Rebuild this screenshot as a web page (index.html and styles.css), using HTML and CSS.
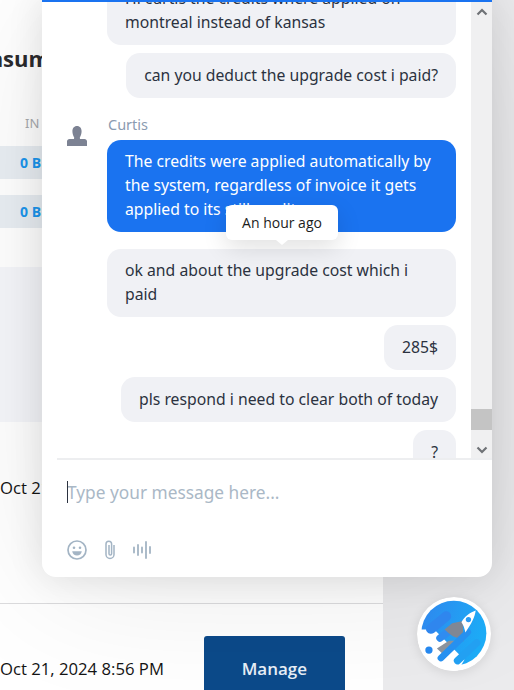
FILE: index.html
```html
<!DOCTYPE html>
<html lang="en">
<head>
<meta charset="utf-8">
<title>Chat</title>
<link rel="stylesheet" href="styles.css">
</head>
<body>
<main class="page">
  <section class="card">
    <h2 class="card-title">Consumption</h2>
    <div class="col-head">IN</div>
    <div class="stat-row"><b>0 B</b></div>
    <div class="stat-row"><b>0 B</b></div>
  </section>
  <section class="band"></section>
  <section class="row row-date-only">
    <span class="date">Oct 21, 2024 8:56 PM</span>
  </section>
  <section class="row row-manage">
    <span class="date">Oct 21, 2024 8:56 PM</span>
    <button class="manage">Manage</button>
  </section>
</main>

<aside class="chat">
  <div class="chat-body">
    <div class="messages">
      <div class="bubble two-line">Hi curtis the credits where applied on montreal instead of kansas</div>
      <div class="bubble fit">can you deduct the upgrade cost i paid?</div>
      <div class="agent">
        <svg class="avatar" viewBox="0 0 20 20" width="20" height="20"><path fill="#7c8293" d="M10 0c3 0 4.600 2.400 4.600 5.200 0 2.600-.9 4.800-1.800 6.200l.2 1.600h4.500c1.400 0 2.500 1 2.500 2.300V20H0v-4.700C0 14 1.100 13 2.500 13H7l.2-1.600c-.9-1.400-1.800-3.600-1.800-6.200C5.400 2.400 7 0 10 0z"/></svg>
        <div class="agent-main">
          <div class="agent-name">Curtis</div>
          <div class="bubble blue">The credits were applied automatically by the system, regardless of invoice it gets applied to its still credit</div>
          <div class="tooltip">An hour ago</div>
        </div>
      </div>
      <div class="bubble after-agent">ok and about the upgrade cost which i paid</div>
      <div class="bubble fit">285$</div>
      <div class="bubble fit tight">pls respond i need to clear both of today</div>
      <div class="bubble fit">?</div>
    </div>
    <div class="scrollbar">
      <svg class="arrow arrow-up" viewBox="0 0 12 8" width="12" height="8"><path d="M1.500 6.500 6 2l4.500 4.500" fill="none" stroke="#6f7276" stroke-width="2.200"/></svg>
      <div class="track"><div class="thumb"></div></div>
      <svg class="arrow arrow-down" viewBox="0 0 12 8" width="12" height="8"><path d="M1.500 1.500 6 6l4.500-4.500" fill="none" stroke="#6f7276" stroke-width="2.200"/></svg>
    </div>
  </div>
  <div class="composer">
    <div class="input"><span class="caret"></span>Type your message here...</div>
    <div class="tools">
      <svg viewBox="0 0 20 20" width="20" height="20"><circle cx="10" cy="10" r="9" fill="none" stroke="#a3b4c4" stroke-width="1.700"/><circle cx="7" cy="7.800" r="1.300" fill="#a3b4c4"/><circle cx="13" cy="7.800" r="1.300" fill="#a3b4c4"/><path d="M5.200 11.300h9.600c-.4 2.700-2.300 4.300-4.800 4.300s-4.400-1.600-4.800-4.300z" fill="#a3b4c4"/></svg>
      <svg viewBox="0 0 12 20" width="12" height="20"><path d="M10 5v9.500a4 4 0 0 1-8 0V4a2.800 2.800 0 0 1 5.600 0v9.800a1.300 1.300 0 0 1-2.600 0V5" fill="none" stroke="#a3b4c4" stroke-width="1.500"/></svg>
      <svg viewBox="0 0 18 18" width="18" height="18"><path d="M1 6.500v5M5 4v10M9 6.500v5M13 1v16M17 6v6" fill="none" stroke="#a3b4c4" stroke-width="1.800" stroke-linecap="round"/></svg>
    </div>
  </div>
</aside>

<button class="launcher" aria-label="Open chat">
  <svg viewBox="52 52 223 223" width="74" height="74">
    <defs><linearGradient id="lg" x1="0" y1="0" x2="1" y2="0.300"><stop offset="0" stop-color="#2f86ee"/><stop offset="1" stop-color="#1cabf6"/></linearGradient></defs>
    <circle cx="163.500" cy="163.500" r="111.500" fill="#fff"/>
    <circle cx="163" cy="161" r="98" fill="url(#lg)"/>
    <polygon points="55,150 104,150 195,241 175,275 55,275" fill="#fff"/>
    <g fill="none" stroke-linecap="round">
      <path d="M140 110 94 148" stroke="#2f86ee" stroke-width="30"/>
      <path d="M155 150 121 176" stroke="#2f8cf0" stroke-width="22"/>
    </g>
    <polygon points="135,150 158,131 190,124 192,186 176,176 160,170 146,160" fill="#7f8794"/>
    <polygon points="112,207 148,184 180,184 170,200 128,222" fill="#8b929c"/>
    <g fill="none" stroke-linecap="round">
      <path d="M205 158 124 236" stroke="#2690f0" stroke-width="20"/>
      <path d="M232 190 174 244" stroke="#22a0f2" stroke-width="22"/>
    </g>
    <circle cx="88" cy="212" r="11" fill="#2688ef"/>
    <path d="M186 128c8-16 24-28 43-35-3 20-12 38-31 66-3-14-6-22-12-31z" fill="#fff"/>
    <circle cx="207" cy="120" r="8" fill="#2a9bf3"/>
  </svg>
</button>
</body>
</html>
```

FILE: styles.css
```css
* { box-sizing: border-box; }
html, body { margin: 0; height: 100%; }
body {
  width: 514px;
  height: 690px;
  overflow: hidden;
  position: relative;
  background: #ebebed;
  font-family: "Noto Sans", "Open Sans", sans-serif;
}
.page {
  width: 407px;
  height: 690px;
  margin-left: -24px;
  display: flex;
  flex-direction: column;
  background: #fff;
}
.card {
  flex: none;
  height: 267px;
  background: #fff;
  padding-top: 42px;
}
.card-title {
  margin: 0 0 0 -15px;
  font: 700 22px/32px "Open Sans", sans-serif;
  color: #2b2b2e;
  white-space: nowrap;
}
.col-head {
  margin: 41px 0 0 49px;
  font-size: 13px;
  line-height: 16px;
  color: #a9abae;
}
.stat-row {
  height: 33px;
  margin-bottom: 16px;
  background: #e9eef3;
  padding-left: 44px;
  font: 14px/33px "Open Sans", sans-serif;
  color: #1b96ee;
}
.col-head + .stat-row { margin-top: 15px; }
.band { flex: none; height: 155px; background: #f5f6fa; }
.row {
  display: flex;
  align-items: flex-start;
  gap: 40px;
  padding-left: 24px;
  background: #fff;
  font: 16.7px/24px "Open Sans", "Noto Sans", sans-serif;
  color: #141414;
}
.row-date-only {
  flex: none;
  height: 182px;
  padding-top: 54px;
  border-bottom: 1px solid #dcdcde;
}
.row-manage { flex: 1; min-height: 0; }
.row-date-only .date, .row-manage .date { white-space: nowrap; }
.row-manage .date { margin-top: 53px; }
.manage {
  flex: none;
  width: 141px;
  height: 64px;
  margin-top: 32px;
  border: 0;
  border-radius: 3px 3px 0 0;
  background: #0c4a8a;
  color: #e8eff7;
  font: 600 17px "Open Sans", sans-serif;
}
.chat {
  position: absolute;
  left: 42px;
  top: 0;
  width: 450px;
  height: 577px;
  background: #fff;
  border-top: 2px solid #1a73f0;
  border-radius: 0 0 14px 14px;
  box-shadow: 0 0 36px rgba(0, 0, 0, .11), 0 10px 140px rgba(0, 0, 0, .09);
  display: flex;
  flex-direction: column;
}
.chat-body {
  height: 456px;
  flex: none;
  display: flex;
  overflow: hidden;
}
.messages {
  flex: 1;
  overflow: hidden;
  display: flex;
  flex-direction: column;
  align-items: flex-end;
  padding-right: 15px;
  gap: 8px;
  margin-top: -26px;
  font-size: 15.75px;
  line-height: 24px;
  color: #2b3240;
}
.bubble {
  width: 349px;
  flex: none;
  padding: 10px 18px 11px 18px;
  border-radius: 14px;
  background: #f0f1f5;
}
.bubble.fit { width: fit-content; }
.agent {
  width: 100%;
  flex: none;
  display: flex;
  margin-top: 8px;
  padding-left: 25px;
  gap: 20px;
  align-items: flex-start;
}
.avatar { flex: none; margin-top: 12px; }
.agent-main { position: relative; width: 349px; }
.agent-name {
  font-size: 14.5px;
  line-height: 20px;
  color: #8b9bb1;
  padding-left: 1px;
  margin-bottom: 6px;
}
.blue { background: #1a73f0; color: #fff; padding: 9px 18px 11px; }
.tooltip {
  position: absolute;
  left: 119px;
  top: 91px;
  width: 112px;
  height: 35px;
  background: #fff;
  border-radius: 6px;
  text-align: center;
  font: 14px/35px "Open Sans", sans-serif;
  color: #1c1c1c;
  box-shadow: 0 8px 24px rgba(0, 0, 0, .12);
}
.tooltip::after {
  content: "";
  position: absolute;
  left: 50%;
  bottom: -5px;
  margin-left: -6px;
  border: 6px solid transparent;
  border-bottom: 0;
  border-top: 5px solid #fff;
}
.after-agent { margin-top: 9px; padding: 9px 18px 11px; }
.tight { margin-top: -1px; }
.scrollbar {
  width: 21px;
  flex: none;
  background: #f0f0f1;
  display: flex;
  flex-direction: column;
  align-items: center;
}
.arrow { flex: none; }
.arrow-up { margin: 6px 0; }
.arrow-down { margin: 16px 0 4px; }
.track { flex: 1; width: 100%; position: relative; }
.thumb { position: absolute; left: 0; right: 0; bottom: 0; height: 21px; background: #c4c4c4; }
.composer {
  flex: 1;
  margin-left: 15px;
  border-top: 2px solid #edeef0;
  padding: 20px 0 0 10px;
}
.input {
  position: relative;
  font-size: 17.3px;
  line-height: 26px;
  color: #aab8c6;
}
.caret {
  position: absolute;
  left: 0;
  top: 1px;
  width: 1px;
  height: 22px;
  background: #2b3240;
}
.tools {
  display: flex;
  align-items: center;
  gap: 17px;
  margin-top: 34px;
}
.launcher {
  position: absolute;
  left: 417px;
  top: 597px;
  width: 74px;
  height: 74px;
  padding: 0;
  border: 0;
  border-radius: 50%;
  background: none;
  box-shadow: 0 2px 12px rgba(0, 0, 0, .1);
}
.launcher svg { display: block; border-radius: 50%; }
```
